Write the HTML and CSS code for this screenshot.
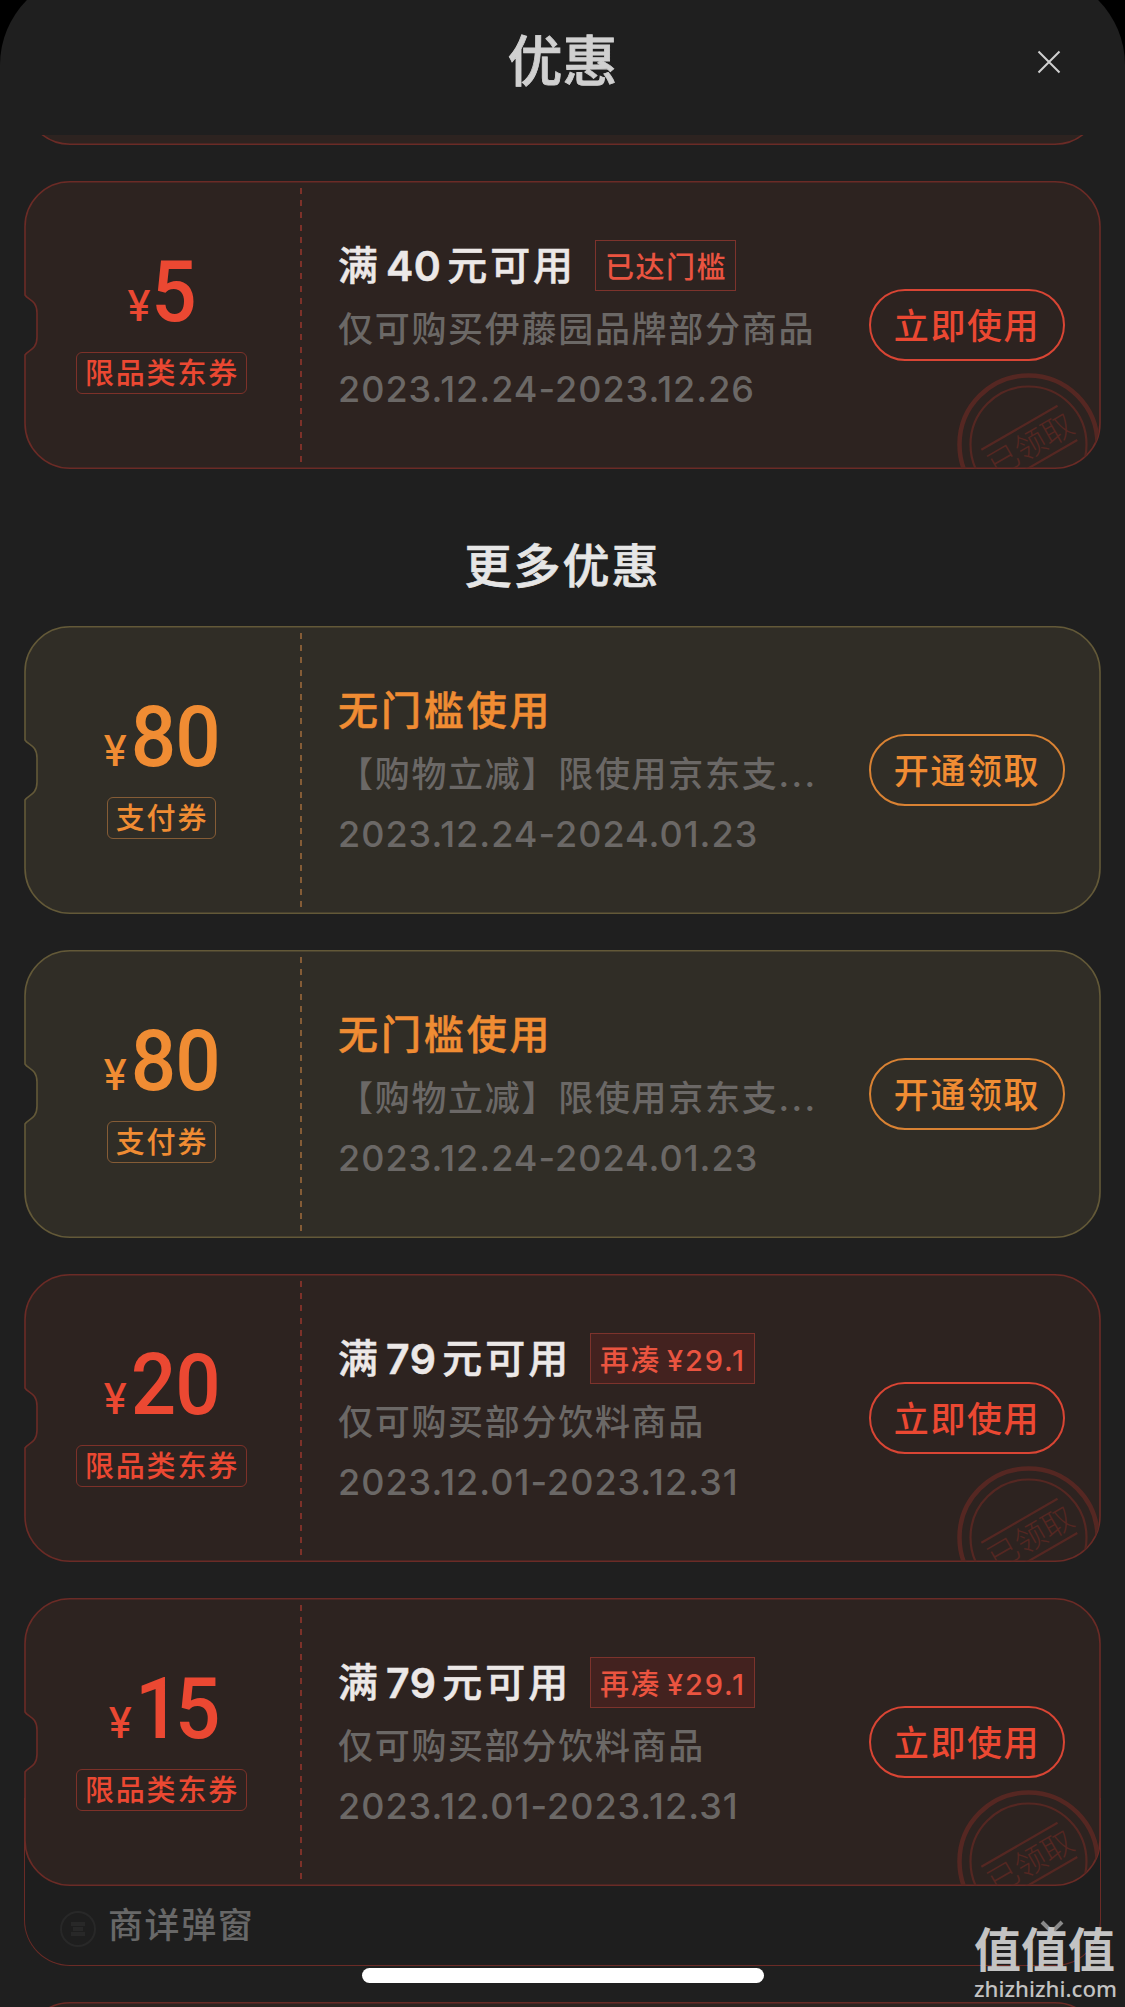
FILE: index.html
```html
<!DOCTYPE html>
<html lang="zh-CN">

<head>
    <meta charset="UTF-8">
    <meta name="viewport" content="width=device-width, initial-scale=1.0">
    <title>优惠</title>
    <link rel="stylesheet" href="styles.css">
</head>

<body>
    <!-- 公用图形 -->
    <svg class="defs" width="0" height="0">
        <defs>
            <path id="ticket" d="M46 .8H1031A45 45 0 0 1 1076 46V242A45 45 0 0 1 1031 287.2H46A45 45 0 0 1 1 242V174C4 169 13 169 13 156V132C13 119 4 119 1 114V46A45 45 0 0 1 46 .8Z" />
            <clipPath id="ticket-clip">
                <use href="#ticket" />
            </clipPath>
            <g id="stamp" clip-path="url(#ticket-clip)">
                <circle cx="1004.5" cy="263.5" r="69" stroke-width="4.5" />
                <circle cx="1004.5" cy="263.5" r="58" stroke-width="2.2" />
                <g transform="rotate(-30 1004.5 263.5)">
                    <path d="M961 244.5H1049M961 284H1049" stroke-width="2.2" />
                    <text class="stamp-text" x="1006" y="276" text-anchor="middle">已领取</text>
                </g>
            </g>
        </defs>
    </svg>

    <div class="sheet">
        <div class="header">
            <h1>优惠</h1>
            <svg class="close" viewBox="0 0 24 24">
                <path d="M1.5 1.5L22.5 22.5M22.5 1.5L1.5 22.5" />
            </svg>
        </div>

        <div class="list">
            <div class="coupon prev">
                <svg class="bg" viewBox="0 0 1077 288"><use href="#ticket" /></svg>
            </div>

            <div class="coupon">
                <svg class="bg" viewBox="0 0 1077 288"><use href="#ticket" /><use class="stamp" href="#stamp" /></svg>
                <div class="left">
                    <p class="price"><i>¥</i><span>5</span></p>
                    <span class="tag">限品类东券</span>
                </div>
                <div class="info">
                    <p class="name">满<b>40</b>元可用<span class="badge reach">已达门槛</span></p>
                    <p class="text">仅可购买伊藤园品牌部分商品</p>
                    <p class="time">2023.12.24-2023.12.26</p>
                </div>
                <button>立即使用</button>
            </div>

            <h2>更多优惠</h2>

            <div class="coupon pay">
                <svg class="bg" viewBox="0 0 1077 288"><use href="#ticket" /></svg>
                <div class="left">
                    <p class="price"><i>¥</i><span>80</span></p>
                    <span class="tag">支付券</span>
                </div>
                <div class="info">
                    <p class="name">无门槛使用</p>
                    <p class="text">【购物立减】限使用京东支<span class="dots">...</span></p>
                    <p class="time">2023.12.24-2024.01.23</p>
                </div>
                <button>开通领取</button>
            </div>

            <div class="coupon pay">
                <svg class="bg" viewBox="0 0 1077 288"><use href="#ticket" /></svg>
                <div class="left">
                    <p class="price"><i>¥</i><span>80</span></p>
                    <span class="tag">支付券</span>
                </div>
                <div class="info">
                    <p class="name">无门槛使用</p>
                    <p class="text">【购物立减】限使用京东支<span class="dots">...</span></p>
                    <p class="time">2023.12.24-2024.01.23</p>
                </div>
                <button>开通领取</button>
            </div>

            <div class="coupon">
                <svg class="bg" viewBox="0 0 1077 288"><use href="#ticket" /><use class="stamp" href="#stamp" /></svg>
                <div class="left">
                    <p class="price"><i>¥</i><span>20</span></p>
                    <span class="tag">限品类东券</span>
                </div>
                <div class="info">
                    <p class="name">满<b>79</b>元可用<span class="badge">再凑<em>¥29.1</em></span></p>
                    <p class="text">仅可购买部分饮料商品</p>
                    <p class="time">2023.12.01-2023.12.31</p>
                </div>
                <button>立即使用</button>
            </div>

            <div class="group">
                <div class="coupon">
                    <svg class="bg" viewBox="0 0 1077 288"><use href="#ticket" /><use class="stamp" href="#stamp" /></svg>
                    <div class="left">
                        <p class="price tight"><i>¥</i><span>15</span></p>
                        <span class="tag">限品类东券</span>
                    </div>
                    <div class="info">
                        <p class="name">满<b>79</b>元可用<span class="badge">再凑<em>¥29.1</em></span></p>
                        <p class="text">仅可购买部分饮料商品</p>
                        <p class="time">2023.12.01-2023.12.31</p>
                    </div>
                    <button>立即使用</button>
                </div>
                <div class="more">
                    <svg class="dot" viewBox="0 0 36 36">
                        <circle cx="18" cy="18" r="17" />
                        <path d="M11 13H25M13 18H23M11 23H25" />
                    </svg>
                    <span>商详弹窗</span>
                    <svg class="arrow" viewBox="0 0 24 14">
                        <path d="M2 2L12 12L22 2" />
                    </svg>
                </div>
            </div>

            <div class="coupon">
                <svg class="bg" viewBox="0 0 1077 288"><use href="#ticket" /></svg>
            </div>
        </div>
    </div>

    <div class="home-bar"></div>
    <div class="watermark">
        <p class="logo">值值值</p>
        <p class="site">zhizhizhi.com</p>
    </div>
</body>

</html>
```
FILE: styles.css
```css
* {
    padding: 0;
    margin: 0;
    box-sizing: border-box;
}

body {
    height: 2007px;
    overflow: hidden;
    background: #000;
    font-family: Inter, "Noto Sans CJK SC", sans-serif;
}

i,
em {
    font-style: normal;
}

.defs {
    position: absolute;
}

.sheet {
    height: 2034px;
    margin-top: -27px;
    padding-top: 27px;
    border-radius: 92px 92px 0 0;
    background: #1f1f1f;
    overflow: hidden;
}

.header {
    display: grid;
    grid-template-columns: 1fr auto 1fr;
    align-items: center;
    height: 135px;
    padding: 0 64px 15px;
}

.header h1 {
    grid-column: 2;
    padding-top: 1px;
    font-size: 55px;
    font-weight: 500;
    line-height: 80px;
    color: #d0d0d0;
    -webkit-text-stroke: 0.8px #d0d0d0;
}

.close {
    justify-self: end;
    width: 24px;
    height: 24px;
    margin-top: 3px;
    fill: none;
    stroke: #d0d0d0;
    stroke-width: 2;
}

.list {
    display: flex;
    flex-direction: column;
    gap: 36px;
    height: 1872px;
    padding: 0 24px;
    overflow: hidden;
}

.list h2 {
    height: 85px;
    line-height: 121px;
    text-align: center;
    font-size: 47px;
    font-weight: 500;
    letter-spacing: 2px;
    color: #e6e6e6;
    -webkit-text-stroke: 0.7px #e6e6e6;
}

/* 优惠券 */
.coupon {
    --main: #eb4832;
    --bg: #2d2320;
    --line: #6b2b26;
    --tag: #7d3129;
    --btn: #d94534;
    position: relative;
    flex: none;
    display: flex;
    width: 1077px;
    height: 288px;
    color: var(--main);
}

.coupon.pay {
    --main: #f08c33;
    --bg: #302d26;
    --line: #635938;
    --tag: #855c36;
    --btn: #d98233;
}

.coupon.prev {
    margin-top: -278px;
}

.coupon .bg {
    position: absolute;
    left: 0;
    top: 0;
    width: 1077px;
    height: 288px;
    fill: var(--bg);
    stroke: var(--line);
    stroke-width: 1.6;
}

.coupon .stamp {
    fill: none;
    stroke: #552722;
}

.stamp-text {
    font-size: 31px;
    font-weight: 300;
    fill: #552722;
    stroke: none;
}

.left,
.info,
.coupon button {
    position: relative;
}

.left {
    display: flex;
    flex-direction: column;
    align-items: center;
    width: 278px;
    padding-top: 66px;
    padding-right: 3px;
}

/* 虚线 */
.left::after {
    content: "";
    position: absolute;
    right: 0;
    top: 7px;
    width: 2px;
    height: 275px;
    background: repeating-linear-gradient(var(--tag) 0 6px, transparent 6px 12.2px);
}

.price {
    display: flex;
    align-items: baseline;
    height: 105px;
    line-height: 90px;
    font-family: Roboto, sans-serif;
    font-size: 86px;
    font-weight: 500;
    letter-spacing: -1px;
}

.price span {
    transform: scaleX(0.93);
    transform-origin: right;
}

.price.tight span {
    letter-spacing: -6px;
}

.price i {
    margin-right: -3px;
    font-family: Inter, sans-serif;
    font-size: 42px;
    font-weight: 500;
    letter-spacing: 0;
}

.tag {
    height: 42px;
    padding: 0 7px 0 8px;
    border: 1.5px solid var(--tag);
    border-radius: 6px;
    font-size: 29px;
    font-weight: 500;
    line-height: 41px;
    letter-spacing: 1.8px;
}

.info {
    flex: 1;
    padding: 59px 0 0 36px;
}

.name {
    display: flex;
    align-items: center;
    height: 51px;
    font-size: 40px;
    font-weight: 500;
    line-height: 46px;
    letter-spacing: 2.9px;
    color: #ece8e7;
    -webkit-text-stroke: 0.5px;
    white-space: nowrap;
}

.pay .name {
    color: var(--main);
}

.name b {
    margin: 0 6px 0 5px;
    font-size: 41px;
    font-weight: 600;
    letter-spacing: 0.5px;
}

.badge {
    height: 51px;
    margin-left: 19px;
    padding: 0 8px 0 9px;
    border: 1px solid #7d332c;
    background: #43221f;
    font-size: 29px;
    font-weight: 500;
    line-height: 53px;
    letter-spacing: 1.5px;
    color: #ea5440;
    -webkit-text-stroke: 0;
}

.badge.reach {
    background: none;
}

.badge em {
    margin-left: 6px;
    letter-spacing: 1.8px;
}

.text {
    height: 62px;
    margin-top: 7px;
    font-size: 35px;
    font-weight: 500;
    line-height: 62px;
    letter-spacing: 1.7px;
    color: #6b6866;
    white-space: nowrap;
}

.dots {
    letter-spacing: 2.4px;
}

.time {
    font-size: 36px;
    font-weight: 500;
    line-height: 58px;
    letter-spacing: 1px;
    color: #6b6866;
    white-space: nowrap;
}

.coupon button {
    width: 196px;
    height: 72px;
    margin: 108px 36px 0 0;
    padding-bottom: 4px;
    border: 2px solid var(--btn);
    border-radius: 36px;
    background: none;
    color: var(--main);
    font-family: inherit;
    font-size: 35px;
    font-weight: 500;
    letter-spacing: 1.6px;
}

/* 带展开栏的优惠券 */
.group {
    flex: none;
    height: 368px;
}

.more {
    display: flex;
    align-items: center;
    height: 168px;
    width: 1077px;
    margin-top: -88px;
    padding: 90px 36px 0 35px;
    border: 1.6px solid #6b2b26;
    border-top: none;
    border-radius: 0 0 46px 46px;
    background: #1e1e1e;
    font-size: 35px;
    font-weight: 500;
    letter-spacing: 1.6px;
    color: #686868;
}

.more span {
    margin: -8px auto 0 12px;
}

.dot {
    width: 36px;
    height: 36px;
    margin-top: 5px;
    fill: none;
    stroke: #282828;
    stroke-width: 2;
}

.dot path {
    stroke-width: 4;
}

.arrow {
    width: 24px;
    height: 14px;
    fill: none;
    stroke: #8a8a8a;
    stroke-width: 4;
}

/* 悬浮层 */
.home-bar {
    position: absolute;
    left: 362px;
    top: 1968px;
    width: 402px;
    height: 15px;
    border-radius: 8px;
    background: #fff;
}

.watermark {
    position: absolute;
    left: 974px;
    top: 1924px;
    color: #c3c3c3;
    white-space: nowrap;
}

.logo {
    height: 52px;
    font-size: 47px;
    font-weight: 700;
    line-height: 51px;
}

.site {
    font-family: "Noto Sans", sans-serif;
    font-size: 22.2px;
    font-weight: 500;
    line-height: 26px;
}
```
